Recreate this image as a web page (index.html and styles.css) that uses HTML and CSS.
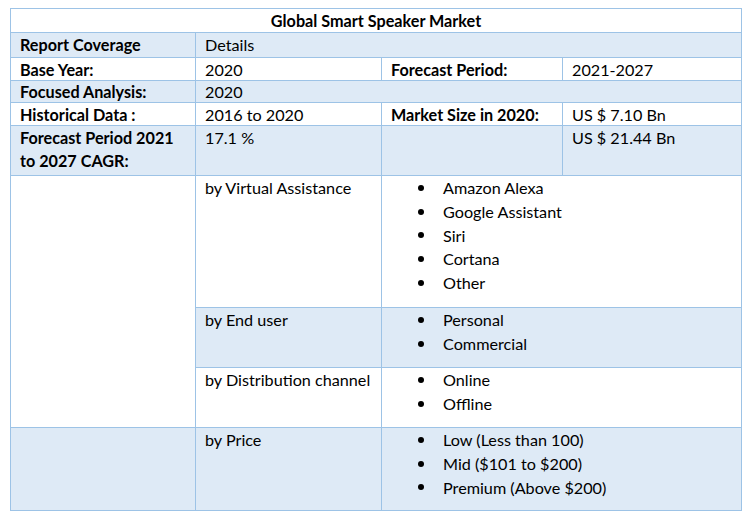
FILE: index.html
```html
<!DOCTYPE html>
<html>
<head>
<meta charset="utf-8">
<link rel="stylesheet" href="styles.css">
</head>
<body>
<table class="market">
  <colgroup>
    <col class="c1"><col class="c2"><col class="c3"><col class="c4">
  </colgroup>
  <tr class="r-24"><th colspan="4" class="title">Global Smart Speaker Market</th></tr>
  <tr class="blue r-25"><td class="b">Report Coverage</td><td colspan="3">Details</td></tr>
  <tr class="r-23"><td class="b">Base Year:</td><td>2020</td><td class="b">Forecast Period:</td><td>2021-2027</td></tr>
  <tr class="blue r-22"><td class="b">Focused Analysis:</td><td colspan="3">2020</td></tr>
  <tr class="r-23"><td class="b">Historical Data :</td><td>2016 to 2020</td><td class="b">Market Size in 2020:</td><td>US $ 7.10 Bn</td></tr>
  <tr class="blue r-50"><td class="b multi">Forecast Period 2021<br>to 2027 CAGR:</td><td>17.1 %</td><td></td><td>US $ 21.44 Bn</td></tr>
  <tr class="r-132"><td rowspan="3" class="white"></td><td>by Virtual Assistance</td>
    <td colspan="2" class="list"><ul class="bul"><li>Amazon Alexa</li><li>Google Assistant</li><li>Siri</li><li>Cortana</li><li>Other</li></ul></td></tr>
  <tr class="blue r-60"><td>by End user</td>
    <td colspan="2" class="list"><ul class="bul"><li>Personal</li><li>Commercial</li></ul></td></tr>
  <tr class="r-60"><td>by Distribution channel</td>
    <td colspan="2" class="list"><ul class="bul"><li>Online</li><li>Offline</li></ul></td></tr>
  <tr class="blue r-83"><td></td><td>by Price</td>
    <td colspan="2" class="list"><ul class="bul"><li>Low (Less than 100)</li><li>Mid ($101 to $200)</li><li>Premium (Above $200)</li></ul></td></tr>
</table>
</body>
</html>
```
FILE: styles.css
```css
html, body {
  margin: 0;
  background: #ffffff;
}
body {
  padding: 8px 0 0 10px;
  font-family: "Lato", "Open Sans", sans-serif;
  font-size: 16.2px;
  color: #000000;
}
.market {
  border-collapse: collapse;
  table-layout: fixed;
  width: 731px;
}
.c1 { width: 185px; }
.c2 { width: 186px; }
.c3 { width: 181px; }
.c4 { width: 179px; }
.market th,
.market td {
  border: 1px solid #9dc3e6;
  padding: 2px 9px 0;
  vertical-align: top;
  text-align: left;
  line-height: 20px;
  font-weight: normal;
}
.market .title {
  text-align: center;
  font-weight: bold;
}
.market .b { font-weight: bold; }
.market td.multi {
  padding-top: 1px;
  line-height: 22.5px;
}
.market td.list { padding-top: 0; }
.blue td { background: #deeaf6; }
.blue td.white, td.white { background: #ffffff; }
.r-24 th { height: 21px; }
.r-25 td { height: 22px; }
.r-23 td { height: 20px; }
.r-22 td { height: 20px; padding-top: 1px; }
.r-50 td { height: 47px; }
.r-132 td { height: 129px; }
.r-60 td { height: 57px; }
.r-83 td { height: 80px; }
.bul {
  list-style: none;
  margin: 0;
  padding: 0 0 0 27px;
}
.bul li {
  display: flex;
  align-items: center;
  line-height: 23.75px;
}
.bul li::before {
  content: "";
  width: 6px;
  height: 6px;
  border-radius: 50%;
  background: #000;
  margin-right: 19px;
  flex: none;
}
```
